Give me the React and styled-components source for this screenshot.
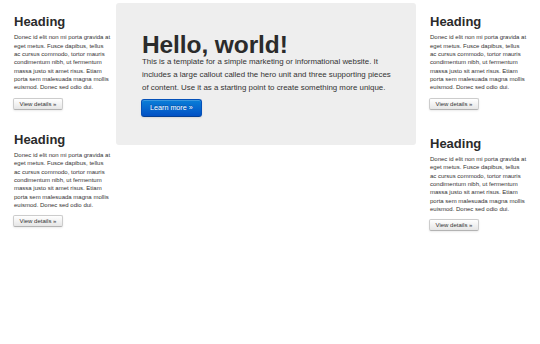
import React from 'react';
import styled, { createGlobalStyle } from 'styled-components';

const Global = createGlobalStyle`
  html, body { margin: 0; padding: 0; background: #fff; }
  body { font-family: "Liberation Sans", Arial, sans-serif; color: #333; }
`;

const Page = styled.div`
  display: flex;
  align-items: flex-start;
  width: 540px;
  height: 344px;
  overflow: hidden;
`;

const Side = styled.aside`
  width: 99px;
  margin-left: ${(p) => p.$left}px;
  padding-top: 15px;
  display: flex;
  flex-direction: column;
`;

const Block = styled.section`
  display: flex;
  flex-direction: column;
  align-items: flex-start;
  margin-top: ${(p) => p.$top || 0}px;
`;

const Heading = styled.h2`
  margin: 0;
  font-size: 13px;
  line-height: 13px;
  font-weight: bold;
  color: #2b2b2b;
`;

const Text = styled.p`
  margin: 5.3px 0 0;
  font-size: 6px;
  line-height: 8.33px;
  max-width: 16.1em;
  color: #333;
`;

const DetailsButton = styled.button`
  margin-top: 6px;
  margin-left: -1px;
  height: 12px;
  box-sizing: border-box;
  padding: 0 5.5px;
  font-family: inherit;
  font-size: 6px;
  line-height: 10px;
  color: #333;
  background: linear-gradient(#ffffff, #e6e6e6);
  border: 1px solid #cccccc;
  border-bottom-color: #b3b3b3;
  border-radius: 2px;
  box-shadow: inset 0 1px 0 rgba(255, 255, 255, 0.2), 0 1px 2px rgba(0, 0, 0, 0.08);
  cursor: pointer;
`;

const Hero = styled.main`
  width: 300px;
  height: 142px;
  box-sizing: border-box;
  margin: 3px 0 0 3px;
  padding: 31px 20px 0 26px;
  background: #eeeeee;
  border-radius: 3px;
`;

const HeroTitle = styled.h1`
  margin: 0;
  font-size: 24.5px;
  line-height: 22px;
  font-weight: bold;
  color: #2b2b2b;
  letter-spacing: -0.1px;
`;

const HeroText = styled.p`
  margin: 0;
  font-size: 7.9px;
  line-height: 12.9px;
  color: #333;
`;

const PrimaryButton = styled.button`
  margin-top: 4px;
  margin-left: -1px;
  height: 18px;
  box-sizing: border-box;
  padding: 0 8px;
  font-family: inherit;
  font-size: 7.2px;
  line-height: 16px;
  color: #fff;
  background: linear-gradient(#0a7fd8, #0150c4);
  border: 1px solid #0450b8;
  border-bottom-color: #033f94;
  border-radius: 3px;
  box-shadow: inset 0 1px 0 rgba(255, 255, 255, 0.2), 0 1px 2px rgba(0, 0, 0, 0.1);
  text-shadow: 0 -1px 0 rgba(0, 0, 0, 0.25);
  cursor: pointer;
`;

const body =
  'Donec id elit non mi porta gravida at eget metus. Fusce dapibus, tellus ac cursus commodo, tortor mauris condimentum nibh, ut fermentum massa justo sit amet risus. Etiam porta sem malesuada magna mollis euismod. Donec sed odio dui.';

function Feature({ top }) {
  return (
    <Block $top={top}>
      <Heading>Heading</Heading>
      <Text>{body}</Text>
      <DetailsButton>View details »</DetailsButton>
    </Block>
  );
}

export default function App() {
  return (
    <>
      <Global />
      <Page>
        <Side $left={14}>
          <Feature />
          <Feature top={23} />
        </Side>
        <Hero>
          <HeroTitle>Hello, world!</HeroTitle>
          <HeroText>
            This is a template for a simple marketing or informational website. It includes a large
            callout called the hero unit and three supporting pieces of content. Use it as a starting
            point to create something more unique.
          </HeroText>
          <PrimaryButton>Learn more »</PrimaryButton>
        </Hero>
        <Side $left={14}>
          <Feature />
          <Feature top={27} />
        </Side>
      </Page>
    </>
  );
}
